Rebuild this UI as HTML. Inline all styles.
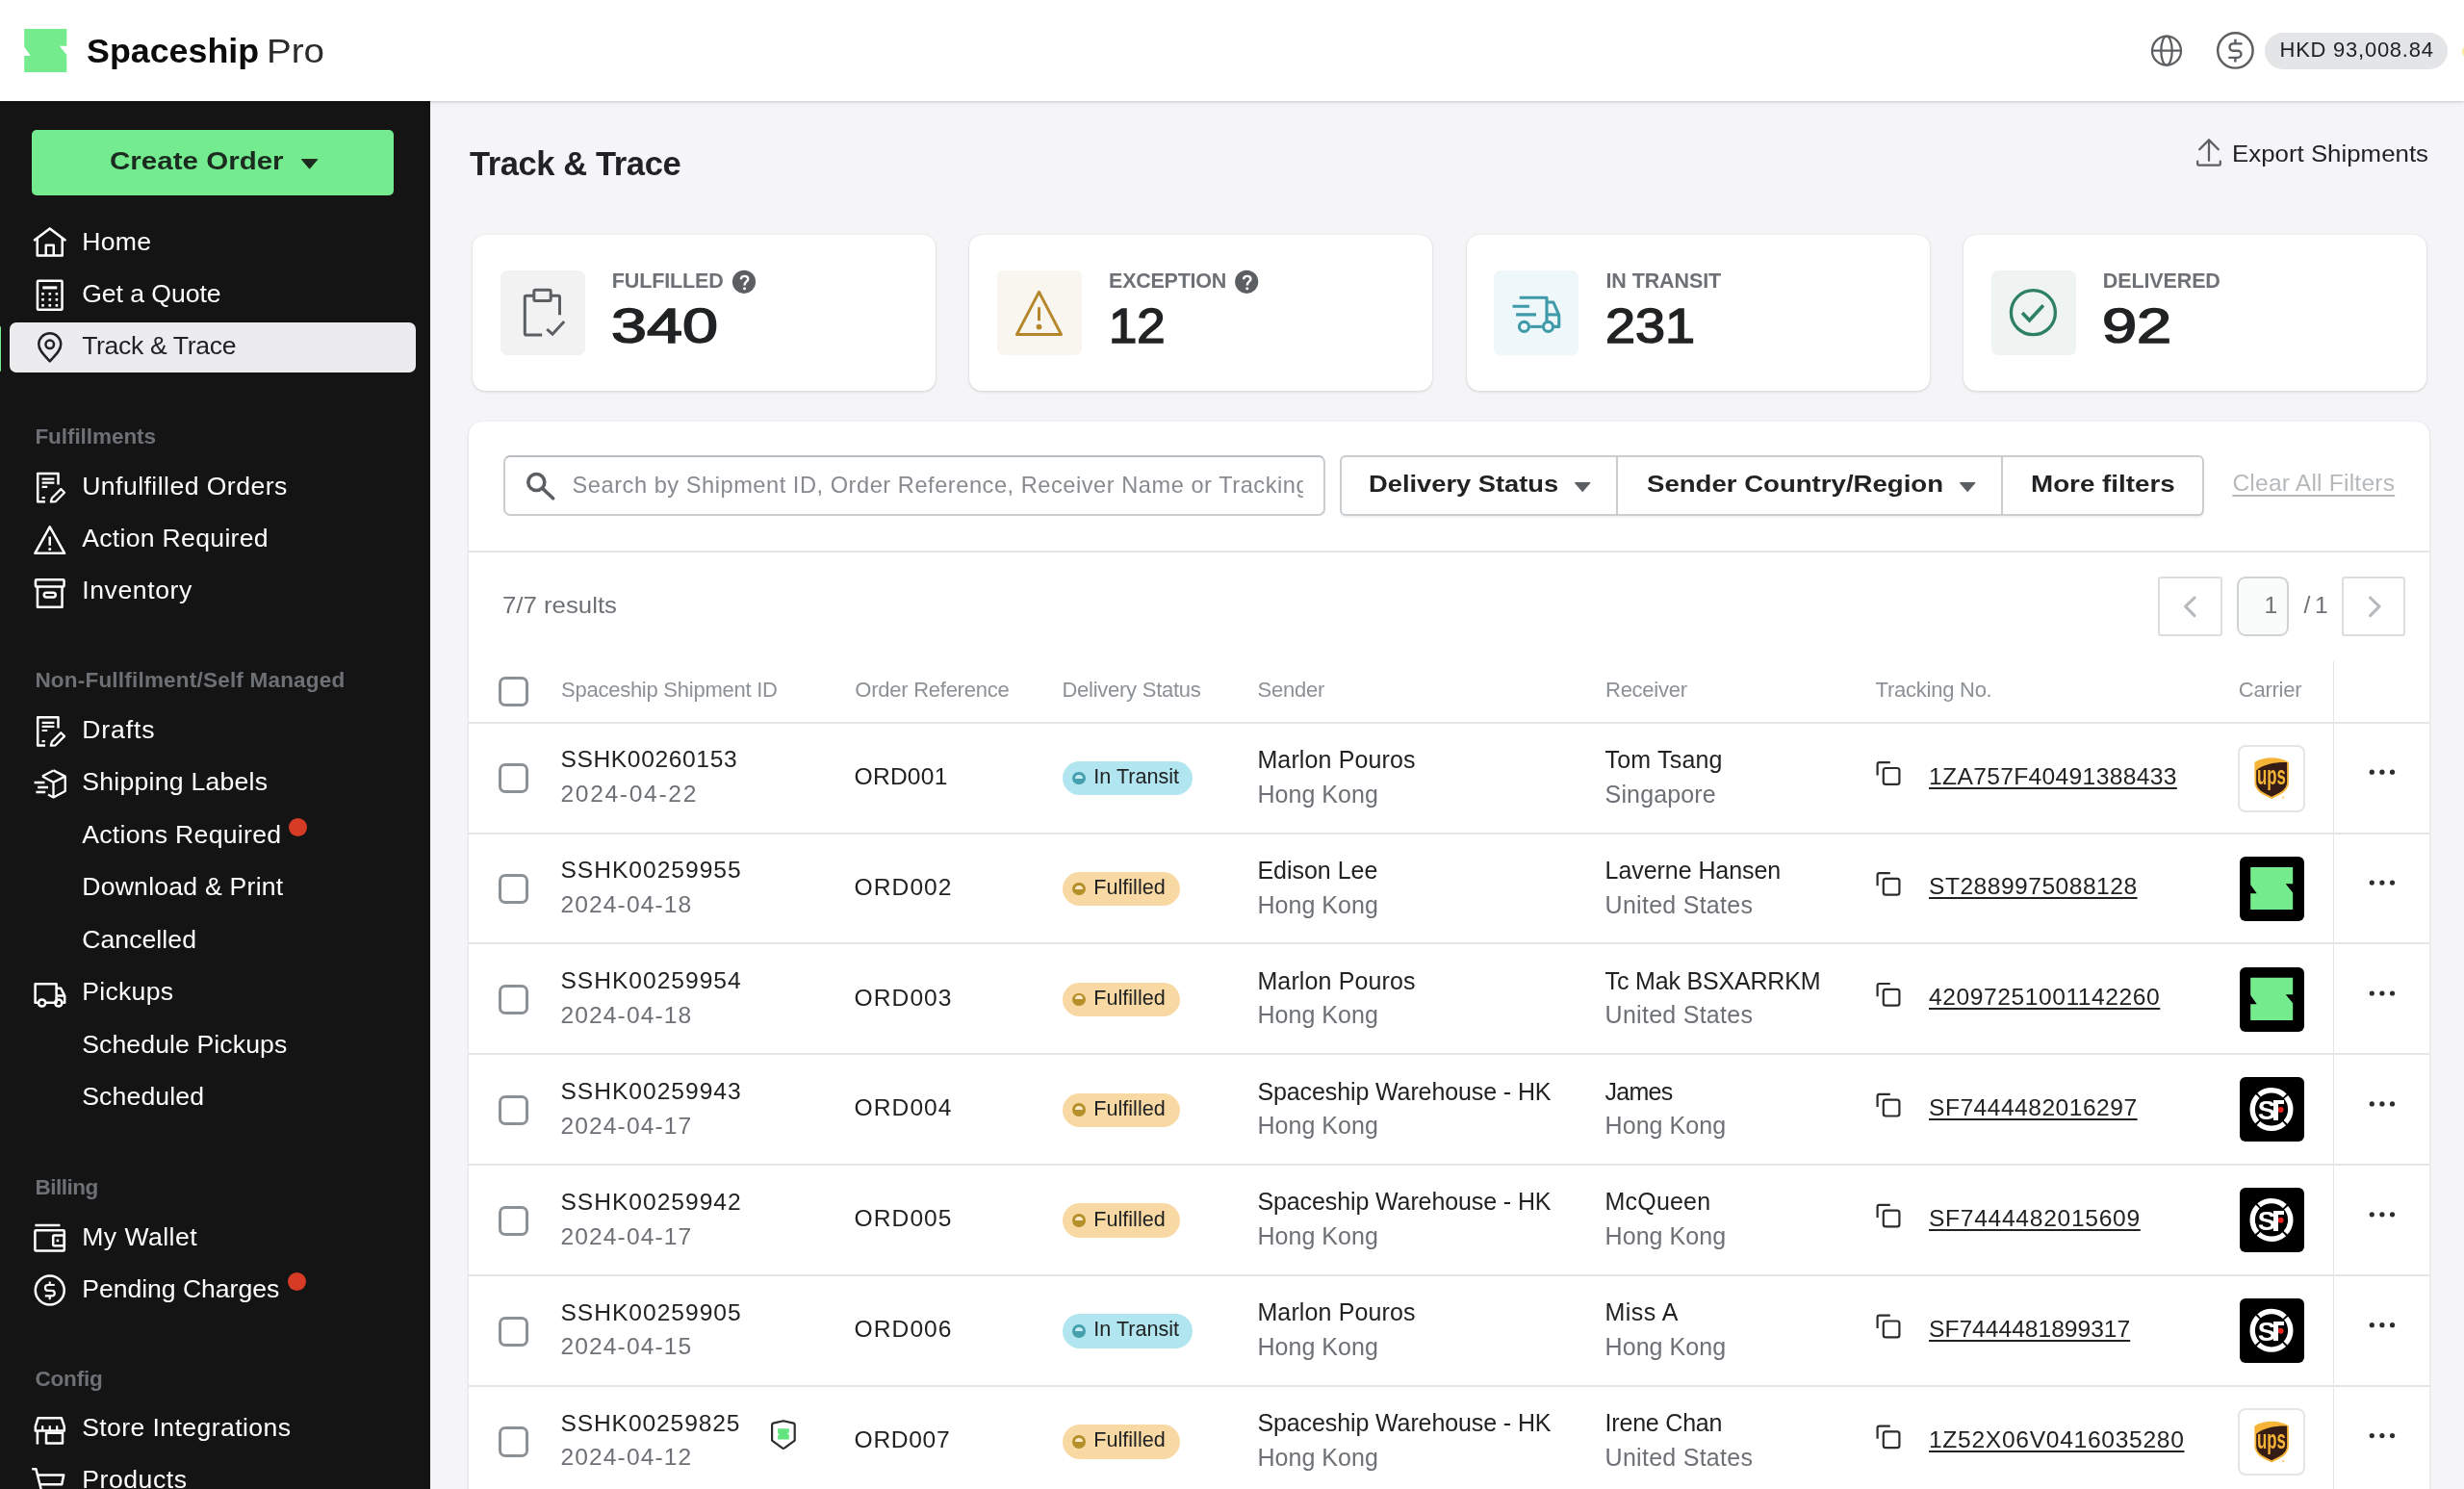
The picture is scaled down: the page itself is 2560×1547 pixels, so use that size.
<!DOCTYPE html>
<html lang="en"><head><meta charset="utf-8"><title>Spaceship Pro - Track &amp; Trace</title>
<style>
*{margin:0;padding:0}
html,body{width:2560px;height:1547px;overflow:hidden;background:#f5f5f8;font-family:"Liberation Sans",sans-serif;}
#app{position:relative;width:2560px;height:1547px;overflow:hidden;will-change:transform;}
.t{position:absolute;white-space:nowrap;display:block;}
.b{position:absolute;}
.ov{position:absolute;left:0;top:0;pointer-events:none;overflow:visible;}
.hdr{position:absolute;left:0;top:0;width:2560px;height:105px;background:#fff;box-shadow:0 1px 2.5px rgba(0,0,0,.15),0 3px 5px rgba(0,0,0,.04);z-index:5;}
.side{position:absolute;left:0;top:105px;width:446.8px;height:1442px;background:#141414;}
.panel{position:absolute;left:487px;top:437.5px;width:2037.2px;height:1200px;background:#fff;border-radius:14px 14px 0 0;box-shadow:0 1px 3px rgba(23,24,24,.14),0 0 1px rgba(23,24,24,.1);}
</style></head>
<body><div id="app">
<!-- main -->
<span class="t" style="left:488.0px;top:153.1px;font-size:34.5px;line-height:34.5px;color:#202223;font-weight:700;letter-spacing:-0.4px;">Track &amp; Trace</span>
<span class="t" style="left:2319.0px;top:148.5px;font-size:23.5px;line-height:23.5px;color:#202223;transform:scaleX(1.0999);transform-origin:0 50%;">Export Shipments</span>
<svg class="ov" width="2560" height="1547" viewBox="0 0 2560 1547"><g fill="none" stroke="#5c5f62" stroke-width="2.25" stroke-linecap="butt" stroke-linejoin="miter"><path d="M2283.2,167.6 V170.2 a1.4,1.4 0 0 0 1.4,1.4 H2305.4 a1.4,1.4 0 0 0 1.4,-1.4 V167.6" stroke-linecap="round"/><path d="M2295,166.8 V146 M2285.2,155.2 L2295,145.4 L2304.8,155.2" stroke-linecap="round"/></g></svg>
<div class="b" style="left:491.0px;top:244.0px;width:481.0px;height:162.0px;background:#fff;border-radius:13px;box-shadow:0 1px 3px rgba(23,24,24,.16),0 0 1px rgba(23,24,24,.12);"></div>
<div class="b" style="left:519.6px;top:280.6px;width:88.0px;height:88.0px;background:#f2f2f3;border-radius:7px;"></div>
<span class="t" style="left:635.8px;top:282.0px;font-size:21.5px;line-height:21.5px;color:#6d7175;font-weight:700;letter-spacing:-0.13px;">FULFILLED</span>
<span class="t" style="left:635.3px;top:314.4px;font-size:49.2px;line-height:49.2px;color:#202223;transform:scaleX(1.3506);transform-origin:0 50%;-webkit-text-stroke:1.5px #202223;">340</span>
<div class="b" style="left:1007.3px;top:244.0px;width:481.0px;height:162.0px;background:#fff;border-radius:13px;box-shadow:0 1px 3px rgba(23,24,24,.16),0 0 1px rgba(23,24,24,.12);"></div>
<div class="b" style="left:1035.9px;top:280.6px;width:88.0px;height:88.0px;background:#f9f6ef;border-radius:7px;"></div>
<span class="t" style="left:1152.1px;top:282.0px;font-size:21.5px;line-height:21.5px;color:#6d7175;font-weight:700;letter-spacing:-0.256px;">EXCEPTION</span>
<span class="t" style="left:1151.6px;top:314.4px;font-size:49.2px;line-height:49.2px;color:#202223;transform:scaleX(1.0727);transform-origin:0 50%;-webkit-text-stroke:1.5px #202223;">12</span>
<div class="b" style="left:1523.7px;top:244.0px;width:481.0px;height:162.0px;background:#fff;border-radius:13px;box-shadow:0 1px 3px rgba(23,24,24,.16),0 0 1px rgba(23,24,24,.12);"></div>
<div class="b" style="left:1552.3px;top:280.6px;width:88.0px;height:88.0px;background:#eef7fa;border-radius:7px;"></div>
<span class="t" style="left:1668.5px;top:282.0px;font-size:21.5px;line-height:21.5px;color:#6d7175;font-weight:700;letter-spacing:-0.104px;">IN TRANSIT</span>
<span class="t" style="left:1668.0px;top:314.4px;font-size:49.2px;line-height:49.2px;color:#202223;transform:scaleX(1.1344);transform-origin:0 50%;-webkit-text-stroke:1.5px #202223;">231</span>
<div class="b" style="left:2040.0px;top:244.0px;width:481.0px;height:162.0px;background:#fff;border-radius:13px;box-shadow:0 1px 3px rgba(23,24,24,.16),0 0 1px rgba(23,24,24,.12);"></div>
<div class="b" style="left:2068.6px;top:280.6px;width:88.0px;height:88.0px;background:#eff4f2;border-radius:7px;"></div>
<span class="t" style="left:2184.8px;top:282.0px;font-size:21.5px;line-height:21.5px;color:#6d7175;font-weight:700;letter-spacing:-0.12px;">DELIVERED</span>
<span class="t" style="left:2184.3px;top:314.4px;font-size:49.2px;line-height:49.2px;color:#202223;transform:scaleX(1.3203);transform-origin:0 50%;-webkit-text-stroke:1.5px #202223;">92</span>
<svg class="ov" width="2560" height="1547" viewBox="0 0 2560 1547">
<circle cx="773.0" cy="292.8" r="12.1" fill="#5c5f62"/>
<path d="M769.9000000000001,290.2 C769.9000000000001,288.0 771.4000000000001,286.90000000000003 773.5500000000001,286.90000000000003 C775.8000000000001,286.90000000000003 777.2,288.1 777.2,289.90000000000003 C777.2,292.6 773.5500000000001,292.40000000000003 773.5500000000001,296.5" fill="none" stroke="#fff" stroke-width="2.4"/>
<circle cx="773.5500000000001" cy="299.8" r="1.5" fill="#fff"/>
<g fill="none" stroke="#5c5f62" stroke-width="3" stroke-linejoin="round"><path d="M554.8000000000001,307.20000000000005 H546.8000000000001 a1.5,1.5 0 0 0 -1.5,1.5 V346.6 a1.5,1.5 0 0 0 1.5,1.5 H563.2"/><path d="M572.2,307.20000000000005 H580.0 a1.5,1.5 0 0 1 1.5,1.5 V327.20000000000005"/><rect x="554.8000000000001" y="301.20000000000005" width="17.4" height="11.4" rx="1.5"/><path d="M568.2,342.0 L574.0,347.20000000000005 L586.2,334.0" stroke-linejoin="miter"/></g>
<circle cx="1295.2" cy="292.8" r="12.1" fill="#5c5f62"/>
<path d="M1292.1000000000001,290.2 C1292.1000000000001,288.0 1293.6000000000001,286.90000000000003 1295.75,286.90000000000003 C1298.0,286.90000000000003 1299.4,288.1 1299.4,289.90000000000003 C1299.4,292.6 1295.75,292.40000000000003 1295.75,296.5" fill="none" stroke="#fff" stroke-width="2.4"/>
<circle cx="1295.75" cy="299.8" r="1.5" fill="#fff"/>
<g fill="none" stroke="#b5872a" stroke-width="3" stroke-linejoin="round" stroke-linecap="round"><path d="M1079.4999999999998,303.40000000000003 L1102.4999999999998,347.40000000000003 H1056.4999999999998 Z"/><path d="M1079.4999999999998,319.20000000000005 V333.20000000000005" stroke-linecap="butt"/><circle cx="1079.4999999999998" cy="339.6" r="1.4" fill="#b5872a"/></g>
<g fill="none" stroke="#3e9aa8" stroke-width="3.1" stroke-linejoin="round"><path d="M1578.8,309.20000000000005 H1607.0 V334.20000000000005"/><path d="M1571.5,318.20000000000005 H1588.8999999999999 M1575.1,326.90000000000003 H1596.0"/><path d="M1590.1,339.40000000000003 H1601.8999999999999"/><circle cx="1583.5" cy="339.40000000000003" r="5"/><circle cx="1608.5" cy="339.40000000000003" r="5"/><path d="M1607.0,314.0 H1613.8999999999999 L1619.7,327.40000000000003 V339.40000000000003 H1614.8999999999999"/><path d="M1607.0,326.90000000000003 H1619.1"/></g>
<g fill="none" stroke="#2e8062" stroke-width="3.3"><circle cx="2112.4" cy="324.70000000000005" r="23"/><path d="M2101.1,325.00000000000006 L2108.5,332.80000000000007 L2122.9,317.30000000000007" stroke-width="3.6"/></g>
</svg>
<div class="panel"></div>
<div class="b" style="left:522.6px;top:473.2px;width:854.2px;height:63.0px;border:2px solid #c9cdd0;border-top-color:#b7bcc1;border-radius:7px;box-sizing:border-box;background:#fff;"></div>
<div class="b" style="left:595.4px;top:480px;width:758.8px;height:50px;overflow:hidden;white-space:nowrap;"><span class="t" style="left:-0.8px;top:12.7px;font-size:23.6px;line-height:23.6px;color:#878b8f;letter-spacing:0.54px;">Search by Shipment ID, Order Reference, Receiver Name or Tracking Number</span></div>
<div class="b" style="left:1391.8px;top:473.4px;width:898.6px;height:62.6px;border:2px solid #c9cdd0;border-radius:6px;box-sizing:border-box;background:#fff;box-shadow:0 2px 0 rgba(0,0,0,.05);"></div>
<div class="b" style="left:1679.4px;top:474.0px;width:2.0px;height:61.6px;background:#c9cdd0;"></div>
<div class="b" style="left:2079.4px;top:474.0px;width:2.0px;height:61.6px;background:#c9cdd0;"></div>
<span class="t" style="left:1422.0px;top:491.4px;font-size:23.8px;line-height:23.8px;color:#202223;font-weight:700;transform:scaleX(1.147);transform-origin:0 50%;">Delivery Status</span>
<span class="t" style="left:1710.6px;top:491.4px;font-size:23.8px;line-height:23.8px;color:#202223;font-weight:700;transform:scaleX(1.159);transform-origin:0 50%;">Sender Country/Region</span>
<span class="t" style="left:2110.4px;top:491.4px;font-size:23.8px;line-height:23.8px;color:#202223;font-weight:700;transform:scaleX(1.167);transform-origin:0 50%;">More filters</span>
<span class="t" style="left:2319.4px;top:490.3px;font-size:24.6px;line-height:24.6px;color:#b5b9bc;letter-spacing:0.2px;text-decoration:underline;text-decoration-thickness:2px;text-underline-offset:3.5px;">Clear All Filters</span>
<div class="b" style="left:487.0px;top:571.6px;width:2037.2px;height:2.0px;background:#e4e5e7;"></div>
<span class="t" style="left:521.8px;top:617.0px;font-size:23.8px;line-height:23.8px;color:#6d7175;transform:scaleX(1.0839);transform-origin:0 50%;">7/7 results</span>
<div class="b" style="left:2242.3px;top:598.8px;width:66.4px;height:62.6px;border:2px solid #dcdee0;box-sizing:border-box;background:#fff;border-radius:3px;"></div>
<div class="b" style="left:2323.6px;top:598.8px;width:54.6px;height:62.6px;border:2px solid #d0d3d6;box-sizing:border-box;background:#fafbfb;border-radius:9px;"></div>
<div class="b" style="left:2433.2px;top:598.8px;width:66.2px;height:62.6px;border:2px solid #dcdee0;box-sizing:border-box;background:#fff;border-radius:3px;"></div>
<span class="t" style="left:2352.4px;top:617.3px;font-size:24.6px;line-height:24.6px;color:#6d7175;">1</span>
<span class="t" style="left:2393.4px;top:617.3px;font-size:24.6px;line-height:24.6px;color:#6d7175;letter-spacing:-1.011px;">/ 1</span>
<svg class="ov" width="2560" height="1547" viewBox="0 0 2560 1547">
<g fill="none" stroke="#5c5f62" stroke-width="3.6"><circle cx="557.3" cy="501" r="8.5"/><path d="M563.6,507.4 L574.6,517.8" stroke-linecap="round"/></g>
<path d="M1636.6,501.6 H1651.8 L1644.2,510.4Z" fill="#5c5f62" stroke="#5c5f62" stroke-width="1.2" stroke-linejoin="round"/>
<path d="M2036.6,501.6 H2051.8 L2044.2,510.4Z" fill="#5c5f62" stroke="#5c5f62" stroke-width="1.2" stroke-linejoin="round"/>
<g fill="none" stroke="#b7babd" stroke-width="3.1" stroke-linejoin="round" stroke-linecap="round"><path d="M2280,621 L2270.6,630.2 L2280,639.6"/><path d="M2462.6,621 L2472,630.2 L2462.6,639.6"/></g>
</svg>
<div class="b" style="left:517.7px;top:702.5px;width:31.2px;height:31.2px;border:3px solid #8c9196;border-radius:7px;box-sizing:border-box;background:#fff;"></div>
<span class="t" style="left:583.0px;top:706.3px;font-size:22px;line-height:22px;color:#8c9196;letter-spacing:-0.25px;">Spaceship Shipment ID</span>
<span class="t" style="left:888.3px;top:706.3px;font-size:22px;line-height:22px;color:#8c9196;letter-spacing:-0.25px;">Order Reference</span>
<span class="t" style="left:1103.4px;top:706.3px;font-size:22px;line-height:22px;color:#8c9196;letter-spacing:-0.25px;">Delivery Status</span>
<span class="t" style="left:1306.6px;top:706.3px;font-size:22px;line-height:22px;color:#8c9196;letter-spacing:-0.25px;">Sender</span>
<span class="t" style="left:1668.0px;top:706.3px;font-size:22px;line-height:22px;color:#8c9196;letter-spacing:-0.25px;">Receiver</span>
<span class="t" style="left:1948.6px;top:706.3px;font-size:22px;line-height:22px;color:#8c9196;letter-spacing:-0.25px;">Tracking No.</span>
<span class="t" style="left:2325.8px;top:706.3px;font-size:22px;line-height:22px;color:#8c9196;letter-spacing:-0.25px;">Carrier</span>
<div class="b" style="left:487.0px;top:749.6px;width:2037.2px;height:2.0px;background:#e4e5e7;"></div>
<div class="b" style="left:2423.8px;top:686.5px;width:1.6px;height:900.0px;background:#e4e5e7;"></div>
<div class="b" style="left:517.7px;top:793.0px;width:31.2px;height:31.2px;border:3px solid #8c9196;border-radius:7px;box-sizing:border-box;background:#fff;"></div>
<span class="t" style="left:582.4px;top:777.1px;font-size:24.6px;line-height:24.6px;color:#202223;letter-spacing:0.62px;">SSHK00260153</span>
<span class="t" style="left:582.4px;top:812.9px;font-size:24.6px;line-height:24.6px;color:#6d7175;letter-spacing:1.69px;">2024-04-22</span>
<span class="t" style="left:887.6px;top:794.7px;font-size:24.6px;line-height:24.6px;color:#202223;letter-spacing:0.207px;">ORD001</span>
<div class="b" style="left:1103.7px;top:790.8px;width:135.4px;height:35.4px;background:#b1e5ef;border-radius:18px;"></div>
<div class="b" style="left:1114.2px;top:801.7px;width:13.8px;height:13.8px;background:#45a0ae;border-radius:50%;"></div>
<div class="b" style="left:1116.9px;top:804.6px;width:8.4px;height:4.1px;background:#c6edf3;border-radius:4.2px 4.2px 0 0;"></div>
<span class="t" style="left:1136.3px;top:795.9px;font-size:21.6px;line-height:21.6px;color:#202223;">In Transit</span>
<span class="t" style="left:1306.4px;top:776.8px;font-size:25px;line-height:25px;color:#202223;letter-spacing:0.131px;">Marlon Pouros</span>
<span class="t" style="left:1306.4px;top:812.6px;font-size:25px;line-height:25px;color:#6d7175;letter-spacing:0.043px;">Hong Kong</span>
<span class="t" style="left:1667.6px;top:776.8px;font-size:25px;line-height:25px;color:#202223;letter-spacing:0.177px;">Tom Tsang</span>
<span class="t" style="left:1667.6px;top:812.6px;font-size:25px;line-height:25px;color:#6d7175;letter-spacing:0.146px;">Singapore</span>
<span class="t" style="left:2004.0px;top:794.5px;font-size:24.6px;line-height:24.6px;color:#202223;letter-spacing:0.341px;text-decoration:underline;text-decoration-thickness:2px;text-underline-offset:3px;">1ZA757F40491388433</span>
<div class="b" style="left:2325.4px;top:773.6px;width:70.0px;height:70.0px;border:2px solid #e3e5e7;border-radius:8px;box-sizing:border-box;background:#fff;"></div>
<span class="t" style="left:2345.3px;top:792.1px;font-size:28px;line-height:28px;color:#f6b437;font-weight:700;transform:scaleX(0.6);transform-origin:0 50%;z-index:5;">ups</span>
<div class="b" style="left:487.0px;top:864.5px;width:2037.2px;height:2.0px;background:#e4e5e7;"></div>
<div class="b" style="left:517.7px;top:907.9px;width:31.2px;height:31.2px;border:3px solid #8c9196;border-radius:7px;box-sizing:border-box;background:#fff;"></div>
<span class="t" style="left:582.4px;top:892.0px;font-size:24.6px;line-height:24.6px;color:#202223;letter-spacing:0.992px;">SSHK00259955</span>
<span class="t" style="left:582.4px;top:927.8px;font-size:24.6px;line-height:24.6px;color:#6d7175;letter-spacing:1.123px;">2024-04-18</span>
<span class="t" style="left:887.6px;top:909.6px;font-size:24.6px;line-height:24.6px;color:#202223;letter-spacing:1.047px;">ORD002</span>
<div class="b" style="left:1103.7px;top:905.7px;width:122.8px;height:35.4px;background:#f9d9a3;border-radius:18px;"></div>
<div class="b" style="left:1114.2px;top:916.6px;width:13.8px;height:13.8px;background:#b5902a;border-radius:50%;"></div>
<div class="b" style="left:1116.9px;top:919.5px;width:8.4px;height:4.1px;background:#fae8c6;border-radius:4.2px 4.2px 0 0;"></div>
<span class="t" style="left:1136.3px;top:910.8px;font-size:21.6px;line-height:21.6px;color:#202223;">Fulfilled</span>
<span class="t" style="left:1306.4px;top:891.6px;font-size:25px;line-height:25px;color:#202223;letter-spacing:-0.018px;">Edison Lee</span>
<span class="t" style="left:1306.4px;top:927.5px;font-size:25px;line-height:25px;color:#6d7175;letter-spacing:0.043px;">Hong Kong</span>
<span class="t" style="left:1667.6px;top:891.6px;font-size:25px;line-height:25px;color:#202223;letter-spacing:-0.063px;">Laverne Hansen</span>
<span class="t" style="left:1667.6px;top:927.5px;font-size:25px;line-height:25px;color:#6d7175;letter-spacing:0.271px;">United States</span>
<span class="t" style="left:2004.0px;top:909.4px;font-size:24.6px;line-height:24.6px;color:#202223;letter-spacing:0.491px;text-decoration:underline;text-decoration-thickness:2px;text-underline-offset:3px;">ST2889975088128</span>
<div class="b" style="left:2326.8px;top:889.7px;width:67.0px;height:67.0px;background:#000;border-radius:6px;"></div>
<div class="b" style="left:487.0px;top:979.4px;width:2037.2px;height:2.0px;background:#e4e5e7;"></div>
<div class="b" style="left:517.7px;top:1022.8px;width:31.2px;height:31.2px;border:3px solid #8c9196;border-radius:7px;box-sizing:border-box;background:#fff;"></div>
<span class="t" style="left:582.4px;top:1006.9px;font-size:24.6px;line-height:24.6px;color:#202223;letter-spacing:0.992px;">SSHK00259954</span>
<span class="t" style="left:582.4px;top:1042.7px;font-size:24.6px;line-height:24.6px;color:#6d7175;letter-spacing:1.123px;">2024-04-18</span>
<span class="t" style="left:887.6px;top:1024.5px;font-size:24.6px;line-height:24.6px;color:#202223;letter-spacing:1.047px;">ORD003</span>
<div class="b" style="left:1103.7px;top:1020.6px;width:122.8px;height:35.4px;background:#f9d9a3;border-radius:18px;"></div>
<div class="b" style="left:1114.2px;top:1031.5px;width:13.8px;height:13.8px;background:#b5902a;border-radius:50%;"></div>
<div class="b" style="left:1116.9px;top:1034.4px;width:8.4px;height:4.1px;background:#fae8c6;border-radius:4.2px 4.2px 0 0;"></div>
<span class="t" style="left:1136.3px;top:1025.7px;font-size:21.6px;line-height:21.6px;color:#202223;">Fulfilled</span>
<span class="t" style="left:1306.4px;top:1006.6px;font-size:25px;line-height:25px;color:#202223;letter-spacing:0.131px;">Marlon Pouros</span>
<span class="t" style="left:1306.4px;top:1042.4px;font-size:25px;line-height:25px;color:#6d7175;letter-spacing:0.043px;">Hong Kong</span>
<span class="t" style="left:1667.6px;top:1006.6px;font-size:25px;line-height:25px;color:#202223;letter-spacing:-0.178px;">Tc Mak BSXARRKM</span>
<span class="t" style="left:1667.6px;top:1042.4px;font-size:25px;line-height:25px;color:#6d7175;letter-spacing:0.271px;">United States</span>
<span class="t" style="left:2004.0px;top:1024.3px;font-size:24.6px;line-height:24.6px;color:#202223;letter-spacing:0.564px;text-decoration:underline;text-decoration-thickness:2px;text-underline-offset:3px;">42097251001142260</span>
<div class="b" style="left:2326.8px;top:1004.6px;width:67.0px;height:67.0px;background:#000;border-radius:6px;"></div>
<div class="b" style="left:487.0px;top:1094.3px;width:2037.2px;height:2.0px;background:#e4e5e7;"></div>
<div class="b" style="left:517.7px;top:1137.7px;width:31.2px;height:31.2px;border:3px solid #8c9196;border-radius:7px;box-sizing:border-box;background:#fff;"></div>
<span class="t" style="left:582.4px;top:1121.8px;font-size:24.6px;line-height:24.6px;color:#202223;letter-spacing:0.992px;">SSHK00259943</span>
<span class="t" style="left:582.4px;top:1157.6px;font-size:24.6px;line-height:24.6px;color:#6d7175;letter-spacing:1.123px;">2024-04-17</span>
<span class="t" style="left:887.6px;top:1139.4px;font-size:24.6px;line-height:24.6px;color:#202223;letter-spacing:1.047px;">ORD004</span>
<div class="b" style="left:1103.7px;top:1135.5px;width:122.8px;height:35.4px;background:#f9d9a3;border-radius:18px;"></div>
<div class="b" style="left:1114.2px;top:1146.4px;width:13.8px;height:13.8px;background:#b5902a;border-radius:50%;"></div>
<div class="b" style="left:1116.9px;top:1149.3px;width:8.4px;height:4.1px;background:#fae8c6;border-radius:4.2px 4.2px 0 0;"></div>
<span class="t" style="left:1136.3px;top:1140.6px;font-size:21.6px;line-height:21.6px;color:#202223;">Fulfilled</span>
<span class="t" style="left:1306.4px;top:1121.5px;font-size:25px;line-height:25px;color:#202223;letter-spacing:-0.105px;">Spaceship Warehouse - HK</span>
<span class="t" style="left:1306.4px;top:1157.3px;font-size:25px;line-height:25px;color:#6d7175;letter-spacing:0.043px;">Hong Kong</span>
<span class="t" style="left:1667.6px;top:1121.5px;font-size:25px;line-height:25px;color:#202223;letter-spacing:-0.773px;">James</span>
<span class="t" style="left:1667.6px;top:1157.3px;font-size:25px;line-height:25px;color:#6d7175;letter-spacing:0.043px;">Hong Kong</span>
<span class="t" style="left:2004.0px;top:1139.2px;font-size:24.6px;line-height:24.6px;color:#202223;letter-spacing:0.491px;text-decoration:underline;text-decoration-thickness:2px;text-underline-offset:3px;">SF7444482016297</span>
<div class="b" style="left:2326.8px;top:1119.2px;width:67.0px;height:67.0px;background:#000;border-radius:6px;"></div>
<span class="t" style="left:2345.8px;top:1140.1px;font-size:28px;line-height:28px;color:#fff;font-weight:700;z-index:5;">S</span><div class="b" style="left:2362.2px;top:1143.1px;width:4.6px;height:20.6px;background:#fff;z-index:5;"></div><div class="b" style="left:2362.2px;top:1143.1px;width:11.2px;height:4.4px;background:#fff;z-index:5;"></div>
<div class="b" style="left:487.0px;top:1209.2px;width:2037.2px;height:2.0px;background:#e4e5e7;"></div>
<div class="b" style="left:517.7px;top:1252.6px;width:31.2px;height:31.2px;border:3px solid #8c9196;border-radius:7px;box-sizing:border-box;background:#fff;"></div>
<span class="t" style="left:582.4px;top:1236.7px;font-size:24.6px;line-height:24.6px;color:#202223;letter-spacing:0.992px;">SSHK00259942</span>
<span class="t" style="left:582.4px;top:1272.5px;font-size:24.6px;line-height:24.6px;color:#6d7175;letter-spacing:1.123px;">2024-04-17</span>
<span class="t" style="left:887.6px;top:1254.3px;font-size:24.6px;line-height:24.6px;color:#202223;letter-spacing:1.047px;">ORD005</span>
<div class="b" style="left:1103.7px;top:1250.4px;width:122.8px;height:35.4px;background:#f9d9a3;border-radius:18px;"></div>
<div class="b" style="left:1114.2px;top:1261.3px;width:13.8px;height:13.8px;background:#b5902a;border-radius:50%;"></div>
<div class="b" style="left:1116.9px;top:1264.2px;width:8.4px;height:4.1px;background:#fae8c6;border-radius:4.2px 4.2px 0 0;"></div>
<span class="t" style="left:1136.3px;top:1255.5px;font-size:21.6px;line-height:21.6px;color:#202223;">Fulfilled</span>
<span class="t" style="left:1306.4px;top:1236.4px;font-size:25px;line-height:25px;color:#202223;letter-spacing:-0.105px;">Spaceship Warehouse - HK</span>
<span class="t" style="left:1306.4px;top:1272.2px;font-size:25px;line-height:25px;color:#6d7175;letter-spacing:0.043px;">Hong Kong</span>
<span class="t" style="left:1667.6px;top:1236.4px;font-size:25px;line-height:25px;color:#202223;letter-spacing:0.177px;">McQueen</span>
<span class="t" style="left:1667.6px;top:1272.2px;font-size:25px;line-height:25px;color:#6d7175;letter-spacing:0.043px;">Hong Kong</span>
<span class="t" style="left:2004.0px;top:1254.1px;font-size:24.6px;line-height:24.6px;color:#202223;letter-spacing:0.705px;text-decoration:underline;text-decoration-thickness:2px;text-underline-offset:3px;">SF7444482015609</span>
<div class="b" style="left:2326.8px;top:1234.1px;width:67.0px;height:67.0px;background:#000;border-radius:6px;"></div>
<span class="t" style="left:2345.8px;top:1255.0px;font-size:28px;line-height:28px;color:#fff;font-weight:700;z-index:5;">S</span><div class="b" style="left:2362.2px;top:1258.0px;width:4.6px;height:20.6px;background:#fff;z-index:5;"></div><div class="b" style="left:2362.2px;top:1258.0px;width:11.2px;height:4.4px;background:#fff;z-index:5;"></div>
<div class="b" style="left:487.0px;top:1324.1px;width:2037.2px;height:2.0px;background:#e4e5e7;"></div>
<div class="b" style="left:517.7px;top:1367.5px;width:31.2px;height:31.2px;border:3px solid #8c9196;border-radius:7px;box-sizing:border-box;background:#fff;"></div>
<span class="t" style="left:582.4px;top:1351.6px;font-size:24.6px;line-height:24.6px;color:#202223;letter-spacing:0.992px;">SSHK00259905</span>
<span class="t" style="left:582.4px;top:1387.4px;font-size:24.6px;line-height:24.6px;color:#6d7175;letter-spacing:1.123px;">2024-04-15</span>
<span class="t" style="left:887.6px;top:1369.2px;font-size:24.6px;line-height:24.6px;color:#202223;letter-spacing:1.047px;">ORD006</span>
<div class="b" style="left:1103.7px;top:1365.3px;width:135.4px;height:35.4px;background:#b1e5ef;border-radius:18px;"></div>
<div class="b" style="left:1114.2px;top:1376.2px;width:13.8px;height:13.8px;background:#45a0ae;border-radius:50%;"></div>
<div class="b" style="left:1116.9px;top:1379.1px;width:8.4px;height:4.1px;background:#c6edf3;border-radius:4.2px 4.2px 0 0;"></div>
<span class="t" style="left:1136.3px;top:1370.4px;font-size:21.6px;line-height:21.6px;color:#202223;">In Transit</span>
<span class="t" style="left:1306.4px;top:1351.2px;font-size:25px;line-height:25px;color:#202223;letter-spacing:0.131px;">Marlon Pouros</span>
<span class="t" style="left:1306.4px;top:1387.0px;font-size:25px;line-height:25px;color:#6d7175;letter-spacing:0.043px;">Hong Kong</span>
<span class="t" style="left:1667.6px;top:1351.2px;font-size:25px;line-height:25px;color:#202223;letter-spacing:0.445px;">Miss A</span>
<span class="t" style="left:1667.6px;top:1387.0px;font-size:25px;line-height:25px;color:#6d7175;letter-spacing:0.043px;">Hong Kong</span>
<span class="t" style="left:2004.0px;top:1369.0px;font-size:24.6px;line-height:24.6px;color:#202223;letter-spacing:-0.002px;text-decoration:underline;text-decoration-thickness:2px;text-underline-offset:3px;">SF7444481899317</span>
<div class="b" style="left:2326.8px;top:1349.0px;width:67.0px;height:67.0px;background:#000;border-radius:6px;"></div>
<span class="t" style="left:2345.8px;top:1369.9px;font-size:28px;line-height:28px;color:#fff;font-weight:700;z-index:5;">S</span><div class="b" style="left:2362.2px;top:1372.9px;width:4.6px;height:20.6px;background:#fff;z-index:5;"></div><div class="b" style="left:2362.2px;top:1372.9px;width:11.2px;height:4.4px;background:#fff;z-index:5;"></div>
<div class="b" style="left:487.0px;top:1439.0px;width:2037.2px;height:2.0px;background:#e4e5e7;"></div>
<div class="b" style="left:517.7px;top:1482.4px;width:31.2px;height:31.2px;border:3px solid #8c9196;border-radius:7px;box-sizing:border-box;background:#fff;"></div>
<span class="t" style="left:582.4px;top:1466.5px;font-size:24.6px;line-height:24.6px;color:#202223;letter-spacing:0.883px;">SSHK00259825</span>
<span class="t" style="left:582.4px;top:1502.3px;font-size:24.6px;line-height:24.6px;color:#6d7175;letter-spacing:1.123px;">2024-04-12</span>
<span class="t" style="left:887.6px;top:1484.1px;font-size:24.6px;line-height:24.6px;color:#202223;letter-spacing:0.667px;">ORD007</span>
<div class="b" style="left:1103.7px;top:1480.2px;width:122.8px;height:35.4px;background:#f9d9a3;border-radius:18px;"></div>
<div class="b" style="left:1114.2px;top:1491.1px;width:13.8px;height:13.8px;background:#b5902a;border-radius:50%;"></div>
<div class="b" style="left:1116.9px;top:1494.0px;width:8.4px;height:4.1px;background:#fae8c6;border-radius:4.2px 4.2px 0 0;"></div>
<span class="t" style="left:1136.3px;top:1485.3px;font-size:21.6px;line-height:21.6px;color:#202223;">Fulfilled</span>
<span class="t" style="left:1306.4px;top:1466.2px;font-size:25px;line-height:25px;color:#202223;letter-spacing:-0.105px;">Spaceship Warehouse - HK</span>
<span class="t" style="left:1306.4px;top:1502.0px;font-size:25px;line-height:25px;color:#6d7175;letter-spacing:0.043px;">Hong Kong</span>
<span class="t" style="left:1667.6px;top:1466.2px;font-size:25px;line-height:25px;color:#202223;letter-spacing:-0.206px;">Irene Chan</span>
<span class="t" style="left:1667.6px;top:1502.0px;font-size:25px;line-height:25px;color:#6d7175;letter-spacing:0.271px;">United States</span>
<span class="t" style="left:2004.0px;top:1483.9px;font-size:24.6px;line-height:24.6px;color:#202223;letter-spacing:0.695px;text-decoration:underline;text-decoration-thickness:2px;text-underline-offset:3px;">1Z52X06V0416035280</span>
<div class="b" style="left:2325.4px;top:1463.0px;width:70.0px;height:70.0px;border:2px solid #e3e5e7;border-radius:8px;box-sizing:border-box;background:#fff;"></div>
<span class="t" style="left:2345.3px;top:1481.5px;font-size:28px;line-height:28px;color:#f6b437;font-weight:700;transform:scaleX(0.6);transform-origin:0 50%;z-index:5;">ups</span>
<svg class="ov" style="z-index:4" width="2560" height="1547" viewBox="0 0 2560 1547">
<g fill="none" stroke="#2c2d2e" stroke-width="2.2"><path d="M1950.6,805.4 V794.2 a2,2 0 0 1 2,-2 H1963.8"/><rect x="1956.8" y="798.0" width="16.6" height="16.8" rx="2.4"/></g>
<path d="M2342.4,792.0 C2352.4,785.8 2367.9,785.8 2377.9,792.0 V812.5 C2377.9,822.0 2369.4,825.5 2360.15,830.0 C2350.9,825.5 2342.4,822.0 2342.4,812.5Z" fill="#f6b437"/><path d="M2344.2000000000003,800.4 C2351.4,794.2 2362.4,791.8 2376.1,792.0 V812.5 C2376.1,820.6 2368.4,823.8 2360.15,827.8 C2351.9,823.8 2344.2000000000003,820.6 2344.2000000000003,812.5Z" fill="#351c15"/><circle cx="2372.2000000000003" cy="828.6" r="1.1" fill="#f6b437" opacity=".8"/>
<circle cx="2464.3" cy="802.2" r="2.6" fill="#2c2d2e"/>
<circle cx="2474.9" cy="802.2" r="2.6" fill="#2c2d2e"/>
<circle cx="2485.5" cy="802.2" r="2.6" fill="#2c2d2e"/>
<g fill="none" stroke="#2c2d2e" stroke-width="2.2"><path d="M1950.6,920.3 V909.1 a2,2 0 0 1 2,-2 H1963.8"/><rect x="1956.8" y="912.9" width="16.6" height="16.8" rx="2.4"/></g>
<path d="M2338.20,900.90 L2382.20,900.90 L2382.20,918.29 L2374.70,918.29 L2382.20,927.42 L2382.20,945.10 L2338.20,945.10 L2338.20,928.30 L2344.70,928.30 L2338.20,919.17Z" fill="#74ec8e"/>
<circle cx="2464.3" cy="917.1" r="2.6" fill="#2c2d2e"/>
<circle cx="2474.9" cy="917.1" r="2.6" fill="#2c2d2e"/>
<circle cx="2485.5" cy="917.1" r="2.6" fill="#2c2d2e"/>
<g fill="none" stroke="#2c2d2e" stroke-width="2.2"><path d="M1950.6,1035.2 V1024.0 a2,2 0 0 1 2,-2 H1963.8"/><rect x="1956.8" y="1027.8000000000002" width="16.6" height="16.8" rx="2.4"/></g>
<path d="M2338.20,1015.80 L2382.20,1015.80 L2382.20,1033.19 L2374.70,1033.19 L2382.20,1042.32 L2382.20,1060.00 L2338.20,1060.00 L2338.20,1043.20 L2344.70,1043.20 L2338.20,1034.07Z" fill="#74ec8e"/>
<circle cx="2464.3" cy="1032.0" r="2.6" fill="#2c2d2e"/>
<circle cx="2474.9" cy="1032.0" r="2.6" fill="#2c2d2e"/>
<circle cx="2485.5" cy="1032.0" r="2.6" fill="#2c2d2e"/>
<g fill="none" stroke="#2c2d2e" stroke-width="2.2"><path d="M1950.6,1150.1000000000001 V1138.9 a2,2 0 0 1 2,-2 H1963.8"/><rect x="1956.8" y="1142.7000000000003" width="16.6" height="16.8" rx="2.4"/></g>
<circle cx="2360.0" cy="1152.5000000000002" r="19.8" fill="none" stroke="#fff" stroke-width="5.4" stroke-dasharray="29.20 1.90" stroke-dashoffset="-16.50"/><circle cx="2369.6" cy="1152.9000000000003" r="3" fill="#e8211c"/>
<circle cx="2464.3" cy="1146.9" r="2.6" fill="#2c2d2e"/>
<circle cx="2474.9" cy="1146.9" r="2.6" fill="#2c2d2e"/>
<circle cx="2485.5" cy="1146.9" r="2.6" fill="#2c2d2e"/>
<g fill="none" stroke="#2c2d2e" stroke-width="2.2"><path d="M1950.6,1265.0 V1253.8 a2,2 0 0 1 2,-2 H1963.8"/><rect x="1956.8" y="1257.6000000000001" width="16.6" height="16.8" rx="2.4"/></g>
<circle cx="2360.0" cy="1267.4" r="19.8" fill="none" stroke="#fff" stroke-width="5.4" stroke-dasharray="29.20 1.90" stroke-dashoffset="-16.50"/><circle cx="2369.6" cy="1267.8000000000002" r="3" fill="#e8211c"/>
<circle cx="2464.3" cy="1261.8" r="2.6" fill="#2c2d2e"/>
<circle cx="2474.9" cy="1261.8" r="2.6" fill="#2c2d2e"/>
<circle cx="2485.5" cy="1261.8" r="2.6" fill="#2c2d2e"/>
<g fill="none" stroke="#2c2d2e" stroke-width="2.2"><path d="M1950.6,1379.8999999999999 V1368.6999999999998 a2,2 0 0 1 2,-2 H1963.8"/><rect x="1956.8" y="1372.5" width="16.6" height="16.8" rx="2.4"/></g>
<circle cx="2360.0" cy="1382.3" r="19.8" fill="none" stroke="#fff" stroke-width="5.4" stroke-dasharray="29.20 1.90" stroke-dashoffset="-16.50"/><circle cx="2369.6" cy="1382.7" r="3" fill="#e8211c"/>
<circle cx="2464.3" cy="1376.7" r="2.6" fill="#2c2d2e"/>
<circle cx="2474.9" cy="1376.7" r="2.6" fill="#2c2d2e"/>
<circle cx="2485.5" cy="1376.7" r="2.6" fill="#2c2d2e"/>
<g fill="none" stroke="#2c2d2e" stroke-width="2.2"><path d="M1950.6,1494.8 V1483.6 a2,2 0 0 1 2,-2 H1963.8"/><rect x="1956.8" y="1487.4" width="16.6" height="16.8" rx="2.4"/></g>
<path d="M2342.4,1481.4 C2352.4,1475.2 2367.9,1475.2 2377.9,1481.4 V1501.9 C2377.9,1511.4 2369.4,1514.9 2360.15,1519.4 C2350.9,1514.9 2342.4,1511.4 2342.4,1501.9Z" fill="#f6b437"/><path d="M2344.2000000000003,1489.8000000000002 C2351.4,1483.6000000000001 2362.4,1481.2 2376.1,1481.4 V1501.9 C2376.1,1510.0 2368.4,1513.2 2360.15,1517.2 C2351.9,1513.2 2344.2000000000003,1510.0 2344.2000000000003,1501.9Z" fill="#351c15"/><circle cx="2372.2000000000003" cy="1518.0" r="1.1" fill="#f6b437" opacity=".8"/>
<circle cx="2464.3" cy="1491.6" r="2.6" fill="#2c2d2e"/>
<circle cx="2474.9" cy="1491.6" r="2.6" fill="#2c2d2e"/>
<circle cx="2485.5" cy="1491.6" r="2.6" fill="#2c2d2e"/>
<path d="M813.9,1476.2 L824.5,1478.6000000000001 a1.6,1.6 0 0 1 1.2,1.6 V1496.6000000000001 L815.1,1504.4 a2,2 0 0 1 -2.4,0 L802.1,1496.6000000000001 V1480.2 a1.6,1.6 0 0 1 1.2,-1.6 Z" fill="#fff" stroke="#2c2d2e" stroke-width="2.2" stroke-linejoin="round"/>
<path d="M808.10,1484.20 L819.80,1484.20 L819.80,1488.68 L817.81,1488.68 L819.80,1491.04 L819.80,1495.60 L808.10,1495.60 L808.10,1491.27 L809.83,1491.27 L808.10,1488.91Z" fill="#62e47e"/>
</svg>
<!-- sidebar -->
<div class="side"></div>
<div class="b" style="left:33.0px;top:135.3px;width:376.4px;height:68.0px;background:#74eb8e;border-radius:5px;"></div>
<span class="t" style="left:114.0px;top:154.8px;font-size:25.7px;line-height:25.7px;color:#1c2b1f;font-weight:700;transform:scaleX(1.15);transform-origin:0 50%;">Create Order</span>
<svg class="ov" width="447" height="1547" viewBox="0 0 447 1547">
<path d="M313.4,165.6 H329.8 L321.6,175.2Z" fill="#1c2b1f" stroke="#1c2b1f" stroke-width="1" stroke-linejoin="round"/>
</svg>
<div class="b" style="left:10.0px;top:334.8px;width:421.8px;height:52.4px;background:#ececee;border-radius:7px;"></div>
<div class="b" style="left:0.0px;top:338.5px;width:1.4px;height:47.0px;background:#74eb8e;border-radius:0 2px 2px 0;"></div>
<span class="t" style="left:36.4px;top:443.2px;font-size:22.5px;line-height:22.5px;color:#6d7175;font-weight:700;letter-spacing:-0.054px;">Fulfillments</span>
<span class="t" style="left:36.4px;top:695.9px;font-size:22.5px;line-height:22.5px;color:#6d7175;font-weight:700;letter-spacing:0.208px;">Non-Fullfilment/Self Managed</span>
<span class="t" style="left:36.4px;top:1222.8px;font-size:22.5px;line-height:22.5px;color:#6d7175;font-weight:700;letter-spacing:-0.496px;">Billing</span>
<span class="t" style="left:36.4px;top:1422.1px;font-size:22.5px;line-height:22.5px;color:#6d7175;font-weight:700;letter-spacing:-0.152px;">Config</span>
<span class="t" style="left:85.2px;top:237.6px;font-size:26.6px;line-height:26.6px;color:#ffffff;letter-spacing:0.336px;">Home</span>
<span class="t" style="left:85.2px;top:291.7px;font-size:26.6px;line-height:26.6px;color:#ffffff;letter-spacing:-0.053px;">Get a Quote</span>
<span class="t" style="left:85.2px;top:346.2px;font-size:26.6px;line-height:26.6px;color:#202223;letter-spacing:-0.356px;">Track &amp; Trace</span>
<span class="t" style="left:85.2px;top:491.5px;font-size:26.6px;line-height:26.6px;color:#ffffff;letter-spacing:0.448px;">Unfulfilled Orders</span>
<span class="t" style="left:85.2px;top:545.8px;font-size:26.6px;line-height:26.6px;color:#ffffff;letter-spacing:0.302px;">Action Required</span>
<span class="t" style="left:85.2px;top:600.3px;font-size:26.6px;line-height:26.6px;color:#ffffff;letter-spacing:0.596px;">Inventory</span>
<span class="t" style="left:85.2px;top:744.6px;font-size:26.6px;line-height:26.6px;color:#ffffff;letter-spacing:0.865px;">Drafts</span>
<span class="t" style="left:85.2px;top:799.4px;font-size:26.6px;line-height:26.6px;color:#ffffff;letter-spacing:0.257px;">Shipping Labels</span>
<span class="t" style="left:85.2px;top:853.8px;font-size:26.6px;line-height:26.6px;color:#ffffff;letter-spacing:0.289px;">Actions Required</span>
<span class="t" style="left:85.2px;top:908.3px;font-size:26.6px;line-height:26.6px;color:#ffffff;letter-spacing:0.24px;">Download &amp; Print</span>
<span class="t" style="left:85.2px;top:962.8px;font-size:26.6px;line-height:26.6px;color:#ffffff;letter-spacing:0.06px;">Cancelled</span>
<span class="t" style="left:85.2px;top:1017.2px;font-size:26.6px;line-height:26.6px;color:#ffffff;letter-spacing:0.289px;">Pickups</span>
<span class="t" style="left:85.2px;top:1071.8px;font-size:26.6px;line-height:26.6px;color:#ffffff;letter-spacing:0.11px;">Schedule Pickups</span>
<span class="t" style="left:85.2px;top:1126.4px;font-size:26.6px;line-height:26.6px;color:#ffffff;letter-spacing:0.147px;">Scheduled</span>
<span class="t" style="left:85.2px;top:1271.6px;font-size:26.6px;line-height:26.6px;color:#ffffff;letter-spacing:0.451px;">My Wallet</span>
<span class="t" style="left:85.2px;top:1325.6px;font-size:26.6px;line-height:26.6px;color:#ffffff;letter-spacing:-0.032px;">Pending Charges</span>
<span class="t" style="left:85.2px;top:1470.4px;font-size:26.6px;line-height:26.6px;color:#ffffff;letter-spacing:0.402px;">Store Integrations</span>
<span class="t" style="left:85.2px;top:1524.4px;font-size:26.6px;line-height:26.6px;color:#ffffff;letter-spacing:0.558px;">Products</span>
<div class="b" style="left:300.0px;top:849.6px;width:19.4px;height:19.4px;background:#d63c25;border-radius:50%;"></div>
<div class="b" style="left:298.6px;top:1322.0px;width:19.4px;height:19.4px;background:#d63c25;border-radius:50%;"></div>
<svg class="ov" width="447" height="1547" viewBox="0 0 447 1547"><g fill="none" stroke="#ffffff" stroke-width="2.5" stroke-linejoin="round" stroke-linecap="butt">
<path d="M35.15,250.0 L51.75,237.4 L68.35,250.0"/><path d="M38.75,247.6 V265.4 H64.75 V247.6"/><path d="M47.75,265.4 V254.8 H55.75 V265.4"/>
<rect x="38.95" y="291.7" width="25.6" height="30" rx="1"/><path d="M44.25,298.9 H59.25" stroke-width="3"/><rect x="43.2" y="304.0" width="2.6" height="2.6" fill="#fff" stroke="none"/><rect x="50.5" y="304.0" width="2.6" height="2.6" fill="#fff" stroke="none"/><rect x="57.6" y="304.0" width="2.6" height="2.6" fill="#fff" stroke="none"/><rect x="43.2" y="310.0" width="2.6" height="2.6" fill="#fff" stroke="none"/><rect x="50.5" y="310.0" width="2.6" height="2.6" fill="#fff" stroke="none"/><rect x="57.6" y="310.0" width="2.6" height="2.6" fill="#fff" stroke="none"/><rect x="43.2" y="316.0" width="2.6" height="2.6" fill="#fff" stroke="none"/><rect x="50.5" y="316.0" width="2.6" height="2.6" fill="#fff" stroke="none"/><rect x="57.6" y="316.0" width="2.6" height="2.6" fill="#fff" stroke="none"/>
<g stroke="#202223"><path d="M51.75,375.4 C46.75,369.79999999999995 40.25,364.29999999999995 40.25,357.79999999999995 A11.5,11.5 0 1 1 63.25,357.79999999999995 C63.25,364.29999999999995 56.75,369.79999999999995 51.75,375.4Z"/><circle cx="51.75" cy="357.79999999999995" r="4.3"/></g>
<path d="M60.5,503.40000000000003 V492.1 H39.2 V521.3000000000001 H47"/><path d="M43.6,497.70000000000005 H56.4 M43.6,501.70000000000005 H56.4 M43.6,505.90000000000003 H49.2 M43.6,517.1 H46.8" stroke-width="2.2"/><path d="M52.8,521.5 L53.9,517.5 L63.3,508.1 L67,511.8 L57.6,521.2 Z" stroke-width="2.2"/>
<path d="M51.75,547.4 L67.15,574.8 H36.35 Z"/><path d="M51.75,557.6 V566.8"/><circle cx="51.75" cy="570.6" r="1.5" fill="#fff" stroke="none"/>
<rect x="36.95" y="602.3" width="29.6" height="7.2" rx="1"/><path d="M38.95,609.5 V630.6999999999999 H64.55 V609.5"/><rect x="45.75" y="615.6999999999999" width="12" height="4.8" rx="2.4"/>
<path d="M60.5,756.5 V745.2 H39.2 V774.4 H47"/><path d="M43.6,750.8 H56.4 M43.6,754.8 H56.4 M43.6,759.0 H49.2 M43.6,770.2 H46.8" stroke-width="2.2"/><path d="M52.8,774.6 L53.9,770.6 L63.3,761.2 L67,764.9 L57.6,774.3 Z" stroke-width="2.2"/>
<path d="M55.5,800.4 L67.7,806.6 V822.0 L55.5,828.4 L50.0,825.6" stroke-width="2.3"/><path d="M43.9,806.6 L55.5,812.8 L67.7,806.6 M55.5,812.8 V828.4 M43.9,806.6 L55.5,800.4" stroke-width="2.3"/><path d="M35.6,813.0 H46.4 M39.2,818.0 H50 M37.4,823.0 H47.2" stroke-width="2.3"/>
<path d="M39.2,1041.8 H36.6 V1022.2 H58.6 V1041.8 H48"/><path d="M58.6,1026.8 H63.2 L67.2,1034.8 V1041.8 H65.2 M58.6,1041.8 H56.4 M59.6,1034.6000000000001 H66.6"/><circle cx="43.6" cy="1042.0" r="3.6"/><circle cx="60.8" cy="1042.0" r="3.6"/>
<path d="M36.4,1273.0 H62.4" /><rect x="36.4" y="1278.2" width="30.4" height="21.2" rx="1"/><rect x="55.2" y="1283.4" width="11.6" height="10.8" rx="1"/><rect x="58.6" y="1287.6" width="2.6" height="2.6" fill="#fff" stroke="none"/>
<circle cx="51.75" cy="1340.6" r="15"/><path d="M56.75,1335.0 H49.75 a2.8,2.9 0 0 0 0,5.8 H53.95 a2.8,2.8 0 0 1 0,5.6 H46.75" stroke-width="2.2"/><path d="M51.75,1331.3999999999999 V1335.0 M51.75,1346.3999999999999 V1350.1999999999998" stroke-width="2.2"/>
<path d="M39.6,1473.1999999999998 H63.8 L66.8,1482.1999999999998 V1486.3999999999999 H36.8 V1482.1999999999998 Z"/><path d="M44.2,1481.1999999999998 V1486.1999999999998 M51.75,1481.1999999999998 V1486.1999999999998 M59.2,1481.1999999999998 V1486.1999999999998" stroke-width="2.2"/><path d="M38.9,1486.3999999999999 V1500.6"/><rect x="48" y="1488.7999999999997" width="17" height="10.8"/>
<path d="M33.2,1526.1999999999998 H37.4 L43.4,1550.1999999999998"/><path d="M39.2,1532.6 H66.2 L64.2,1542.1999999999998 H41.6"/>
</g></svg>
<!-- header -->
<div class="hdr"></div>
<svg class="ov" style="z-index:6" width="2560" height="106" viewBox="0 0 2560 106">
<path d="M25.20,30.00 L69.30,30.00 L69.30,47.70 L61.78,47.70 L69.30,57.00 L69.30,75.00 L25.20,75.00 L25.20,57.90 L31.71,57.90 L25.20,48.60Z" fill="#74ec8e"/>
<g fill="none" stroke="#5c5f62" stroke-width="2.25"><circle cx="2251" cy="52.7" r="15"/><ellipse cx="2251" cy="52.7" rx="5.7" ry="15"/><path d="M2236,52.6H2266"/></g>
<g fill="none" stroke="#5c5f62" stroke-width="2.45" stroke-linecap="round"><circle cx="2322.4" cy="52.4" r="18.2"/><path d="M2328.6,45.3 H2320.0 a3.5,3.7 0 0 0 0,7.4 H2325.0 a3.5,3.55 0 0 1 0,7.1 H2316.2000000000003" stroke-width="2.35"/><path d="M2322.4,40.8 V45.3 M2322.4,59.8 V64.4" stroke-width="2.5" stroke-linecap="butt"/></g>
<circle cx="2564.2" cy="53.6" r="6.4" fill="#fbeea2"/>
</svg>
<span class="t" style="left:90.4px;top:35.8px;font-size:34.4px;line-height:34.4px;color:#0b0b0b;font-weight:700;transform:scaleX(1.0411);transform-origin:0 50%;z-index:6;">Spaceship</span>
<span class="t" style="left:277.4px;top:35.6px;font-size:34.6px;line-height:34.6px;color:#2b2b2b;transform:scaleX(1.1169);transform-origin:0 50%;z-index:6;">Pro</span>
<div class="b" style="left:2353.0px;top:34.0px;width:190.0px;height:37.5px;background:#e4e5e7;border-radius:19px;z-index:6;"></div>
<span class="t" style="left:2368.5px;top:41.3px;font-size:22px;line-height:22px;color:#202223;letter-spacing:0.75px;z-index:7;">HKD 93,008.84</span>
</div></body></html>
